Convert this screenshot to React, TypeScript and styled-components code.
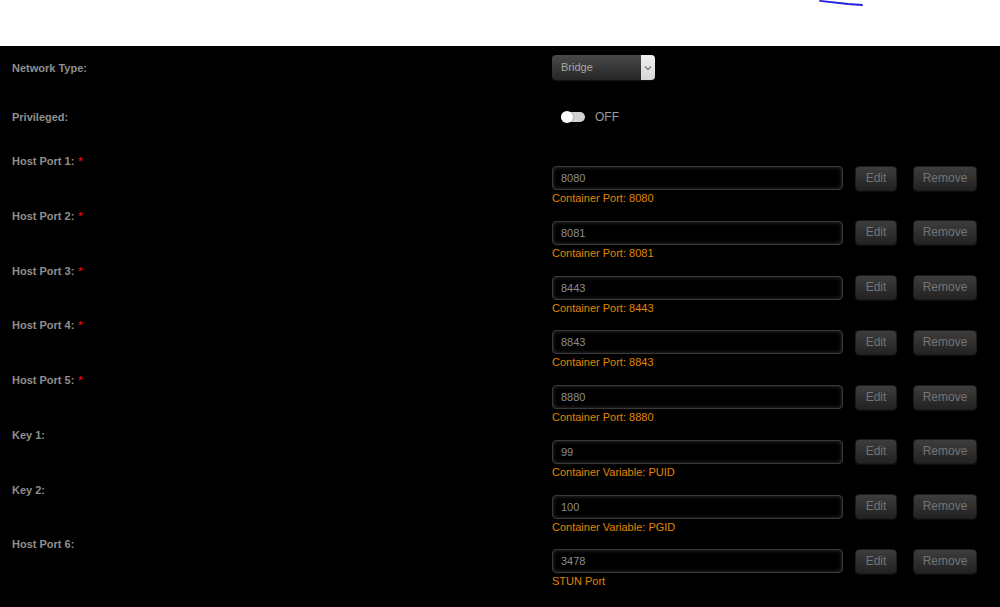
import styled, { createGlobalStyle } from "styled-components";

const GlobalStyle = createGlobalStyle`
  html, body {
    margin: 0;
    padding: 0;
    background: #000;
    font-family: "Liberation Sans", Arial, sans-serif;
  }
`;

const Page = styled.div`
  width: 1000px;
  min-height: 607px;
  background: #000;
`;

const TopBar = styled.div`
  height: 46px;
  background: #fff;
  display: flex;
  align-items: flex-start;
  padding-left: 818px;
  box-sizing: border-box;
`;

const Form = styled.div`
  padding: 9px 0 0 12px;
`;

const Row = styled.div<{ $height?: number; $margin?: string }>`
  display: grid;
  grid-template-columns: 540px 1fr;
  align-items: center;
  height: ${(p) => (p.$height ? `${p.$height}px` : "auto")};
  margin: ${(p) => p.$margin ?? "0"};
`;

const PortRow = styled.div`
  display: grid;
  grid-template-columns: 540px 1fr;
  align-items: start;
  height: 54.75px;
`;

const Label = styled.div`
  font-size: 11px;
  font-weight: bold;
  line-height: 12px;
  color: #8f8f8f;
`;

const Required = styled.span`
  color: #e00000;
  margin-left: 4px;
`;

const Content = styled.div`
  padding-top: 11px;
`;

const Line = styled.div`
  display: flex;
  align-items: center;
  height: 24px;
`;

const Select = styled.div`
  width: 103px;
  height: 25px;
  box-sizing: border-box;
  border-radius: 4px;
  display: flex;
  overflow: hidden;
  background: linear-gradient(#4a4a4a, #262626);
  box-shadow: 0 1px 1px rgba(255, 255, 255, 0.08);
`;

const SelectText = styled.div`
  flex: 1;
  padding-left: 9px;
  font-size: 11px;
  line-height: 25px;
  color: #a8a8a8;
`;

const SelectArrow = styled.div`
  width: 14px;
  background: linear-gradient(#f0f0f0, #d6d6d6);
  display: flex;
  align-items: center;
  justify-content: center;
`;

const Toggle = styled.div`
  margin-left: 9px;
  width: 24px;
  height: 10px;
  border-radius: 5px;
  background: #d2d2d2;
  position: relative;
`;

const Knob = styled.div`
  position: absolute;
  left: 0;
  top: -1px;
  width: 12px;
  height: 12px;
  border-radius: 50%;
  background: #fff;
  box-shadow: 0 0 2px rgba(0, 0, 0, 0.4);
`;

const ToggleText = styled.span`
  margin-left: 10px;
  font-size: 12px;
  color: #9a9a9a;
`;

const Input = styled.div`
  width: 291px;
  height: 24px;
  box-sizing: border-box;
  border: 1px solid #3a3a3a;
  border-radius: 4px;
  background: #000;
  box-shadow: inset 0 0 4px rgba(90, 90, 90, 0.6);
  padding-left: 8px;
  font-size: 11px;
  line-height: 22px;
  color: #8a8c94;
`;

const Button = styled.div<{ $width: number; $gap: number }>`
  width: ${(p) => p.$width}px;
  height: 25px;
  margin-left: ${(p) => p.$gap}px;
  box-sizing: border-box;
  border-radius: 4px;
  background: linear-gradient(#3d3d3d, #222);
  border: 1px solid #1c1c1c;
  box-shadow: 0 1px 1px rgba(255, 255, 255, 0.06);
  font-size: 12px;
  line-height: 23px;
  text-align: center;
  color: #747474;
`;

const Hint = styled.div`
  margin-top: 1px;
  font-size: 11px;
  line-height: 14px;
  color: #e08600;
`;

type Port = { label: string; value: string; hint: string; required?: boolean };

const ports: Port[] = [
  { label: "Host Port 1:", value: "8080", hint: "Container Port: 8080", required: true },
  { label: "Host Port 2:", value: "8081", hint: "Container Port: 8081", required: true },
  { label: "Host Port 3:", value: "8443", hint: "Container Port: 8443", required: true },
  { label: "Host Port 4:", value: "8843", hint: "Container Port: 8843", required: true },
  { label: "Host Port 5:", value: "8880", hint: "Container Port: 8880", required: true },
  { label: "Key 1:", value: "99", hint: "Container Variable: PUID" },
  { label: "Key 2:", value: "100", hint: "Container Variable: PGID" },
  { label: "Host Port 6:", value: "3478", hint: "STUN Port" },
];

export default function App() {
  return (
    <Page>
      <GlobalStyle />
      <TopBar>
        <svg width="46" height="8" viewBox="0 0 46 8">
          <path d="M2 0.9 L30 4 L44 5" stroke="#2222dd" strokeWidth="1.8" fill="none" strokeLinecap="round" />
        </svg>
      </TopBar>
      <Form>
        <Row $height={25}>
          <Label>Network Type:</Label>
          <Select>
            <SelectText>Bridge</SelectText>
            <SelectArrow>
              <svg width="8" height="6" viewBox="0 0 8 6">
                <path d="M1 1.5 L4 4.5 L7 1.5" stroke="#777" strokeWidth="1.2" fill="none" />
              </svg>
            </SelectArrow>
          </Select>
        </Row>
        <Row $height={20} $margin="25px 0 30px">
          <Label>Privileged:</Label>
          <Line>
            <Toggle>
              <Knob />
            </Toggle>
            <ToggleText>OFF</ToggleText>
          </Line>
        </Row>
        {ports.map((p) => (
          <PortRow key={p.label}>
            <Label>
              {p.label}
              {p.required && <Required>*</Required>}
            </Label>
            <Content>
              <Line>
                <Input>{p.value}</Input>
                <Button $width={42} $gap={12}>Edit</Button>
                <Button $width={64} $gap={16}>Remove</Button>
              </Line>
              <Hint>{p.hint}</Hint>
            </Content>
          </PortRow>
        ))}
      </Form>
    </Page>
  );
}
